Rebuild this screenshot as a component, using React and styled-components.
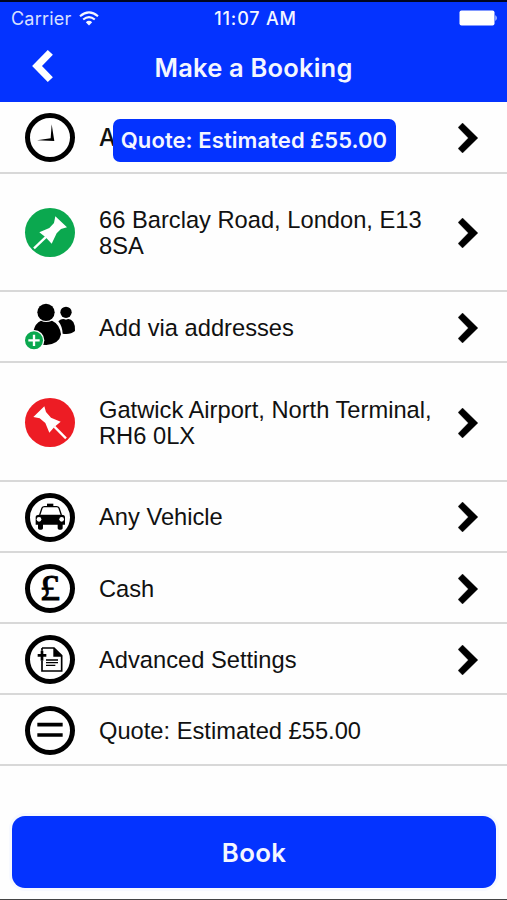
import styled, { createGlobalStyle } from "styled-components";

const blue = "#0433ff";
const green = "#0ba84f";
const red = "#ed1c24";
const lineColor = "#d8d8d8";
const systemFont = `Inter, "Liberation Sans", sans-serif`;
const rowFont = `"Liberation Sans", Arial, sans-serif`;

const GlobalStyle = createGlobalStyle`
  body {
    margin: 0;
    background: #fff;
  }
`;

const Screen = styled.div`
  box-sizing: border-box;
  position: relative;
  display: flex;
  flex-direction: column;
  width: 507px;
  height: 900px;
  overflow: hidden;
  background: #fefefe;
  border-top: 2px solid #000522;
  border-bottom: 1px solid #444;
`;

const Header = styled.header`
  height: 100.4px;
  flex-shrink: 0;
  color: #f4f6ff;
  background: ${blue};
  font-family: ${systemFont};
`;

const StatusBar = styled.div`
  display: grid;
  grid-template-columns: 1fr auto 1fr;
  align-items: center;
  height: 32px;
  padding: 0 9px 0 13px;
`;

const Carrier = styled.div`
  display: flex;
  align-items: center;
  gap: 8px;
  margin-left: -2px;
  font-size: 18px;
  letter-spacing: 0.2px;
  color: #d9e0ff;
`;

const Time = styled.div`
  font-size: 18px;
  font-weight: 500;
  letter-spacing: 0.8px;
`;

const Battery = styled.svg`
  justify-self: end;
`;

const NavBar = styled.div`
  display: grid;
  grid-template-columns: 60px 1fr 60px;
  align-items: center;
  height: 67px;
`;

const BackButton = styled.button`
  display: flex;
  padding: 0 0 3px 32px;
  border: 0;
  background: none;
`;

const Title = styled.h1`
  margin: 0;
  text-align: center;
  font-size: 25.5px;
  font-weight: 600;
  letter-spacing: 0.2px;
  white-space: nowrap;
`;

const List = styled.ul`
  margin: 0;
  padding: 0;
  list-style: none;
`;

const Row = styled.li`
  box-sizing: border-box;
  display: flex;
  align-items: center;
  height: ${(props) => (props.$tall ? 118.6 : 71.15)}px;
  padding: 2px 29px 0 25px;
  border-bottom: 2px solid ${lineColor};
`;

const RowIcon = styled.svg`
  flex-shrink: 0;
  width: 50px;
  height: 49px;
  overflow: visible;
`;

const Label = styled.div`
  width: 342px;
  margin-left: 24px;
  font-family: ${(props) => (props.$system ? systemFont : rowFont)};
  font-size: 23.7px;
  font-weight: ${(props) => (props.$system ? 500 : 400)};
  line-height: 26px;
  color: #111;
`;

const Chevron = styled.svg`
  margin-left: auto;
`;

const Toast = styled.div`
  position: absolute;
  top: 116.5px;
  left: 112.5px;
  display: flex;
  align-items: center;
  justify-content: center;
  width: 283px;
  height: 43px;
  border-radius: 7px;
  color: #f4f6ff;
  background: ${blue};
  font-family: ${systemFont};
  font-size: 22px;
  font-weight: 600;
  letter-spacing: 0.08px;
  white-space: nowrap;
`;

const Footer = styled.footer`
  margin-top: auto;
  padding: 0 11px 11px 12px;
`;

const BookButton = styled.button`
  display: block;
  width: 100%;
  height: 72.5px;
  padding: 2px 0 0;
  border: 0;
  border-radius: 13px;
  color: #f4f6ff;
  background: ${blue};
  box-shadow: 0 0 0 3px #f7f9ff;
  font-family: ${systemFont};
  font-size: 25.8px;
  font-weight: 600;
  letter-spacing: 0.3px;
`;

function Ring() {
  return <ellipse cx="75" cy="73.5" rx="67.5" ry="66" fill="#fff" stroke="#000" strokeWidth="15" />;
}

function ClockIcon() {
  return (
    <RowIcon viewBox="0 0 150 147">
      <Ring />
      <path d="M80 34L88 84L36 82L77 76Z" />
    </RowIcon>
  );
}

function PickupIcon() {
  return (
    <RowIcon viewBox="0 0 150 147">
      <ellipse cx="75" cy="73.5" rx="75" ry="73.5" fill={green} />
      <path d="M91 25L126 58L108 63L95 76L80 107L62 88L43 73L73 60L87 45Z" fill="#fff" />
      <path d="M27 121L64 86" stroke="#fff" strokeWidth="7" />
    </RowIcon>
  );
}

function DropoffIcon() {
  return (
    <RowIcon viewBox="0 0 150 147">
      <ellipse cx="75" cy="73.5" rx="75" ry="73.5" fill={red} />
      <path d="M58 25L63 42L78 59L107 71L88 87L73 104L61 75L44 61L25 57Z" fill="#fff" />
      <path d="M88 86L123 121" stroke="#fff" strokeWidth="7" />
    </RowIcon>
  );
}

function ViaIcon() {
  return (
    <RowIcon viewBox="0 0 150 147">
      <circle cx="123" cy="28" r="17" />
      <path d="M100 55Q111 44 123 50Q135 44 145 57Q152 69 150 84Q136 96 113 92Q112 70 100 55Z" />
      <circle cx="63" cy="28" r="26" />
      <path d="M25 84Q31 60 48 53Q62 61 81 53Q104 63 108 94Q103 123 64 126L50 125Z" />
      <circle cx="27" cy="112" r="31" fill="#fff" />
      <circle cx="27" cy="112" r="27" fill={green} />
      <path d="M10 112H44M27 95V129" stroke="#fff" strokeWidth="7" />
    </RowIcon>
  );
}

function TaxiIcon() {
  return (
    <RowIcon viewBox="0 0 150 147">
      <Ring />
      <path d="M66 32H85V41H66Z" />
      <path d="M44 66L51 45Q53 41 58 41H95Q100 41 102 45L109 66" fill="none" stroke="#000" strokeWidth="4" />
      <path d="M33 68Q38 65 43 65H110Q119 65 120 72V95H113V106Q113 110 108 110H103Q98 110 98 106V95H54V106Q54 110 49 110H44Q39 110 39 106V95H32V72Z" />
      <circle cx="42" cy="79" r="7" fill="#fff" />
      <circle cx="110" cy="79" r="7" fill="#fff" />
    </RowIcon>
  );
}

function CashIcon() {
  return (
    <RowIcon viewBox="0 0 150 147">
      <Ring />
      <text
        x="75"
        y="109"
        textAnchor="middle"
        textLength="61"
        lengthAdjust="spacingAndGlyphs"
        fontFamily="'Liberation Serif', serif"
        fontSize="108"
        stroke="#000"
        strokeWidth="2.5"
      >
        £
      </text>
    </RowIcon>
  );
}

function SettingsIcon() {
  return (
    <RowIcon viewBox="0 0 150 147">
      <Ring />
      <path d="M51 39H87L110 62V108H51V77M51 47V39" fill="none" stroke="#000" strokeWidth="5" />
      <path d="M85 38L112 65H85Z" />
      <path d="M51 47V77M38 61H64" stroke="#000" strokeWidth="8" />
      <path d="M63 75H99M63 83H99M63 91H91" stroke="#000" strokeWidth="4" />
    </RowIcon>
  );
}

function EqualsIcon() {
  return (
    <RowIcon viewBox="0 0 150 147">
      <Ring />
      <path d="M37 56H113M37 87H113" stroke="#000" strokeWidth="11" />
    </RowIcon>
  );
}

function WifiIcon() {
  return (
    <svg width="20" height="15" viewBox="0 0 20 15" fill="none" stroke="#f4f6ff" strokeWidth="2.1">
      <path d="M1 5.2Q10 -2.6 19 5.2" />
      <path d="M4.2 8.5Q10 3.6 15.8 8.5" />
      <path d="M6.8 11.2Q10 8.4 13.2 11.2L10 14.6Z" fill="#f4f6ff" stroke="none" />
    </svg>
  );
}

const rows = [
  { label: "A", Icon: ClockIcon, link: true, system: true },
  { label: "66 Barclay Road, London, E13 8SA", Icon: PickupIcon, link: true, tall: true },
  { label: "Add via addresses", Icon: ViaIcon, link: true },
  { label: "Gatwick Airport, North Terminal, RH6 0LX", Icon: DropoffIcon, link: true, tall: true },
  { label: "Any Vehicle", Icon: TaxiIcon, link: true },
  { label: "Cash", Icon: CashIcon, link: true },
  { label: "Advanced Settings", Icon: SettingsIcon, link: true },
  { label: "Quote: Estimated £55.00", Icon: EqualsIcon },
];

function App() {
  return (
    <Screen>
      <GlobalStyle />
      <Header>
        <StatusBar>
          <Carrier>
            Carrier
            <WifiIcon />
          </Carrier>
          <Time>11:07 AM</Time>
          <Battery width="39" height="16" viewBox="0 0 39 16" fill="#fff">
            <rect x="0.5" y="0.5" width="35" height="15" rx="2" />
            <path d="M36.5 5Q38.8 8 36.5 11Z" />
          </Battery>
        </StatusBar>
        <NavBar>
          <BackButton aria-label="Back">
            <svg width="21" height="32" viewBox="0 0 61 94" fill="#fff">
              <path d="M46 0L61 14L29 47L61 80L46 94L0 47Z" />
            </svg>
          </BackButton>
          <Title>Make a Booking</Title>
        </NavBar>
      </Header>
      <List>
        {rows.map(({ label, Icon, link, tall, system }) => (
          <Row key={label} $tall={tall}>
            <Icon />
            <Label $system={system}>{label}</Label>
            {link && (
              <Chevron width="20" height="30" viewBox="0 0 58 88">
                <path d="M13 0L58 44L13 88L0 75L30 44L0 13Z" stroke="#000" strokeWidth="1" />
              </Chevron>
            )}
          </Row>
        ))}
      </List>
      <Footer>
        <BookButton>Book</BookButton>
      </Footer>
      <Toast>Quote: Estimated £55.00</Toast>
    </Screen>
  );
}

export default App;
